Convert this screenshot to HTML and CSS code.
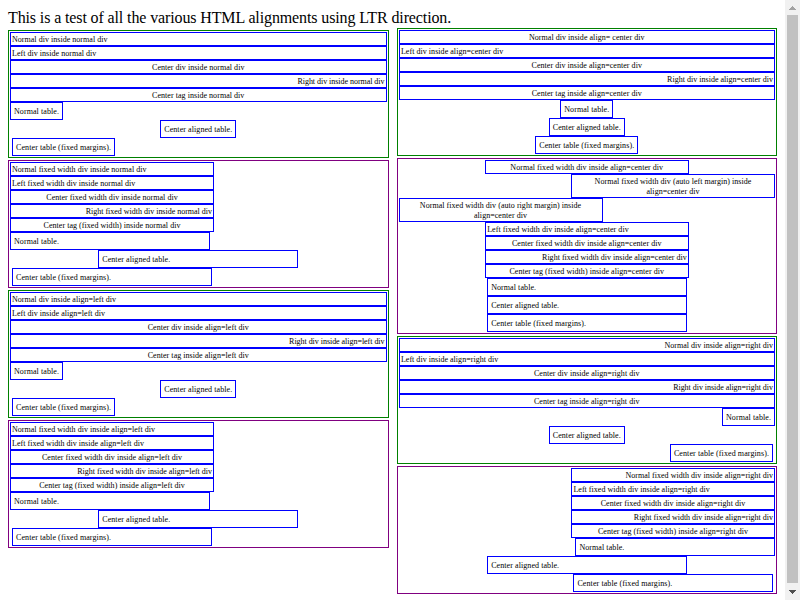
FILE: index.html
```
<!DOCTYPE html>
<html lang="en" dir="ltr">
<head>
<meta charset="utf-8">
<title>HTML alignments, LTR</title>
<link rel="stylesheet" href="styles.css">
</head>
<body>
<div class="intro">This is a test of all the various HTML alignments using LTR direction.</div>
<div class="columns">
<div class="column">
<div class="group">
<div>Normal div inside normal div</div>
<div class="left">Left div inside normal div</div>
<div class="center">Center div inside normal div</div>
<div class="right">Right div inside normal div</div>
<div class="center tag">Center tag inside normal div</div>
<table><tr><td>Normal table.</td></tr></table>
<table class="middle"><tr><td>Center aligned table.</td></tr></table>
<table class="margins"><tr><td>Center table (fixed margins).</td></tr></table>
</div>
<div class="group fixed">
<div>Normal fixed width div inside normal div</div>
<div class="left">Left fixed width div inside normal div</div>
<div class="center">Center fixed width div inside normal div</div>
<div class="right">Right fixed width div inside normal div</div>
<div class="center tag">Center tag (fixed width) inside normal div</div>
<table><tr><td>Normal table.</td></tr></table>
<table class="middle"><tr><td>Center aligned table.</td></tr></table>
<table class="margins"><tr><td>Center table (fixed margins).</td></tr></table>
</div>
<div class="group left">
<div>Normal div inside align=left div</div>
<div class="left">Left div inside align=left div</div>
<div class="center">Center div inside align=left div</div>
<div class="right">Right div inside align=left div</div>
<div class="center tag">Center tag inside align=left div</div>
<table><tr><td>Normal table.</td></tr></table>
<table class="middle"><tr><td>Center aligned table.</td></tr></table>
<table class="margins"><tr><td>Center table (fixed margins).</td></tr></table>
</div>
<div class="group fixed left">
<div>Normal fixed width div inside align=left div</div>
<div class="left">Left fixed width div inside align=left div</div>
<div class="center">Center fixed width div inside align=left div</div>
<div class="right">Right fixed width div inside align=left div</div>
<div class="center tag">Center tag (fixed width) inside align=left div</div>
<table><tr><td>Normal table.</td></tr></table>
<table class="middle"><tr><td>Center aligned table.</td></tr></table>
<table class="margins"><tr><td>Center table (fixed margins).</td></tr></table>
</div>
</div>
<div class="column second">
<div class="group center">
<div>Normal div inside align= center div</div>
<div class="left">Left div inside align=center div</div>
<div class="center">Center div inside align=center div</div>
<div class="right">Right div inside align=center div</div>
<div class="center tag">Center tag inside align=center div</div>
<table><tr><td>Normal table.</td></tr></table>
<table class="middle"><tr><td>Center aligned table.</td></tr></table>
<table class="margins"><tr><td>Center table (fixed margins).</td></tr></table>
</div>
<div class="group fixed center">
<div>Normal fixed width div inside align=center div</div>
<div class="auto-left">Normal fixed width div (auto left margin) inside<br>align=center div</div>
<div class="auto-right">Normal fixed width div (auto right margin) inside<br>align=center div</div>
<div class="left">Left fixed width div inside align=center div</div>
<div class="center">Center fixed width div inside align=center div</div>
<div class="right">Right fixed width div inside align=center div</div>
<div class="center tag">Center tag (fixed width) inside align=center div</div>
<table><tr><td>Normal table.</td></tr></table>
<table class="middle"><tr><td>Center aligned table.</td></tr></table>
<table class="margins"><tr><td>Center table (fixed margins).</td></tr></table>
</div>
<div class="group right">
<div>Normal div inside align=right div</div>
<div class="left">Left div inside align=right div</div>
<div class="center">Center div inside align=right div</div>
<div class="right">Right div inside align=right div</div>
<div class="center tag">Center tag inside align=right div</div>
<table><tr><td>Normal table.</td></tr></table>
<table class="middle"><tr><td>Center aligned table.</td></tr></table>
<table class="margins"><tr><td>Center table (fixed margins).</td></tr></table>
</div>
<div class="group fixed right">
<div>Normal fixed width div inside align=right div</div>
<div class="left">Left fixed width div inside align=right div</div>
<div class="center">Center fixed width div inside align=right div</div>
<div class="right">Right fixed width div inside align=right div</div>
<div class="center tag">Center tag (fixed width) inside align=right div</div>
<table><tr><td>Normal table.</td></tr></table>
<table class="middle"><tr><td>Center aligned table.</td></tr></table>
<table class="margins"><tr><td>Center table (fixed margins).</td></tr></table>
</div>
</div>
</div>
<div class="scrollbar">
<svg class="up" width="15" height="15" shape-rendering="crispEdges"><path fill="#a3a3a3" d="M7 6h1v1h1v1h1v1h1v1H4V9h1V8h1V7h1z"/></svg>
<div class="thumb"></div>
<svg class="down" width="15" height="17" shape-rendering="crispEdges"><path fill="#505050" d="M4 7h7v1h-1v1H9v1H8v1H7v-1H6V9H5V8H4z"/></svg>
</div>
</body>
</html>
```
FILE: styles.css
```
html {
  height: 100%;
  overflow: hidden;
  background: #fff;
}
body {
  box-sizing: border-box;
  height: 100%;
  margin: 0;
  padding: 8px 23px 0 8px;
  overflow: hidden;
  color: #000;
  font: 16px "Liberation Serif", serif;
}
.intro {
  box-sizing: border-box;
  height: 20px;
  padding-top: 1px;
  letter-spacing: -0.122px;
}
.columns {
  display: flex;
  gap: 8px;
  font-size: 8px;
  line-height: 10px;
}
.column {
  flex: 1 1 0;
  min-width: 0;
  padding-top: 2px;
}
.second {
  padding-top: 0;
}
.group {
  margin-bottom: 2px;
  border: 1px solid green;
  padding: 1px;
}
.group.fixed {
  border-color: purple;
}
.group > div {
  border: 1px solid blue;
  padding: 2px 1px 0;
  letter-spacing: 0.03px;
}
.group.center > div {
  letter-spacing: 0.045px;
}
.group > .right {
  letter-spacing: -0.035px;
}
.group.fixed > .right {
  letter-spacing: -0.01px;
}
.group.center > .right {
  letter-spacing: 0.015px;
}
.group > .tag {
  letter-spacing: 0.045px;
}
.group > table {
  border: 1px solid blue;
  border-spacing: 2px;
  letter-spacing: 0.078px;
}
.group > .margins {
  letter-spacing: 0.096px;
}
td {
  padding: 2px 1px 0;
  text-align: left;
}
.fixed > div {
  width: 200px;
}
.fixed > table {
  width: 200px;
}
.left {
  text-align: -webkit-left;
}
.center {
  text-align: -webkit-center;
}
.right {
  text-align: -webkit-right;
}
.second .left {
  text-indent: 0.4px;
}
.second .fixed td {
  text-indent: 0.4px;
}
.group > .auto-left {
  margin-left: auto;
}
.group > .auto-right {
  margin-right: auto;
}
.middle {
  margin: 0 auto;
}
.margins {
  margin: 0 2px;
}
.scrollbar {
  position: fixed;
  top: 0;
  right: 0;
  bottom: 0;
  width: 15px;
  display: flex;
  flex-direction: column;
  background: #f1f1f1;
}
.scrollbar svg {
  flex: none;
}
.thumb {
  flex: 1;
  margin: 0 2px;
  background: #c1c1c1;
}
```
